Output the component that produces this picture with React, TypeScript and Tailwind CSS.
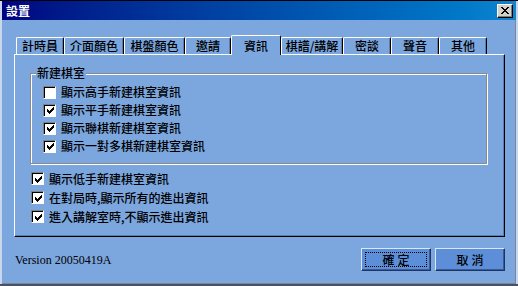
import React from 'react';

const face = 'bg-[#7ba6de]';

const tabs = [
  { label: '計時員', cls: 'w-[48px]' },
  { label: '介面顏色', cls: 'w-[60px]' },
  { label: '棋盤顏色', cls: 'w-[61px]' },
  { label: '邀請', cls: 'w-[46px]' },
  { label: '資訊', cls: 'w-[50px]', active: true },
  { label: '棋譜/講解', cls: 'w-[62px]' },
  { label: '密談', cls: 'w-[48px]' },
  { label: '聲音', cls: 'w-[48px]' },
  { label: '其他', cls: 'w-[48px]' },
];

const checkPixels = [
  [6, 0],
  [5, 1], [6, 1],
  [0, 2], [4, 2], [5, 2], [6, 2],
  [0, 3], [1, 3], [3, 3], [4, 3], [5, 3],
  [0, 4], [1, 4], [2, 4], [3, 4], [4, 4],
  [1, 5], [2, 5], [3, 5],
  [2, 6],
];

const closePixels = [
  [0, 0], [1, 0], [6, 0], [7, 0],
  [1, 1], [2, 1], [5, 1], [6, 1],
  [2, 2], [3, 2], [4, 2], [5, 2],
  [3, 3], [4, 3],
  [2, 4], [3, 4], [4, 4], [5, 4],
  [1, 5], [2, 5], [5, 5], [6, 5],
  [0, 6], [1, 6], [6, 6], [7, 6],
];

function Pixels({ pts, w, h }: { pts: number[][]; w: number; h: number }) {
  return (
    <svg width={w} height={h} viewBox={`0 0 ${w} ${h}`} shapeRendering="crispEdges">
      {pts.map(([x, y]) => (
        <rect key={`${x}-${y}`} x={x} y={y} width="1" height="1" fill="#000" />
      ))}
    </svg>
  );
}

function CheckBox({ checked }: { checked: boolean }) {
  return (
    <span className="w-[13px] h-[13px] shrink-0 bg-white border border-t-[#808080] border-l-[#808080] border-r-white border-b-white shadow-[inset_1px_1px_0_#000] flex items-center justify-center pl-px pt-px">
      {checked && <Pixels pts={checkPixels} w={7} h={7} />}
    </span>
  );
}

function Row({ checked, label, h }: { checked: boolean; label: string; h: string }) {
  return (
    <div className={`flex items-center gap-[5px] ${h}`}>
      <CheckBox checked={checked} />
      <span className="text-[12px] leading-[14px] font-medium text-black">{label}</span>
    </div>
  );
}

export default function App() {
  return (
    <div className="w-[518px] h-[286px] flex flex-col bg-[#c9d7ec] border-t border-b-2 border-b-[#4a5262] px-[2px] font-['Noto_Sans_CJK_TC','Noto_Sans_CJK_SC',sans-serif] overflow-hidden">
      {/* Title bar */}
      <div className="h-[19px] shrink-0 flex items-center justify-between pl-[4px] pr-[3px] bg-gradient-to-r from-[#000080] to-[#1084d0]">
        <span className="text-white text-[12px] font-bold leading-[14px]">設置</span>
        <button className="w-[16px] h-[14px] bg-[#d4d0c8] border border-t-white border-l-white border-r-black border-b-black shadow-[inset_-1px_-1px_0_#808080] flex items-center justify-center">
          <Pixels pts={closePixels} w={8} h={7} />
        </button>
      </div>

      {/* Body */}
      <div className={`flex-1 ${face} border-r border-b border-[#7c8698] pt-[15px] pl-[12px]`}>
        {/* Tabs */}
        <div className="flex items-end h-[19px] pl-[2px]">
          {tabs.map((t) =>
            t.active ? (
              <div
                key={t.label}
                className={`${t.cls} relative z-10 h-[20px] -mb-px ${face} border-t border-l border-white border-r border-r-black rounded-t-[2px] flex items-start justify-center pt-[3px] text-[12px] leading-[14px] font-medium`}
              >
                {t.label}
              </div>
            ) : (
              <div
                key={t.label}
                className={`${t.cls} h-[17px] border-t border-l border-white border-r border-r-black rounded-t-[2px] shadow-[inset_-1px_0_0_#5d7fb0] flex items-center justify-center text-[12px] leading-[14px] font-medium`}
              >
                {t.label}
              </div>
            )
          )}
        </div>

        {/* Panel */}
        <div className="w-[491px] h-[183px] border-t border-l border-white border-r border-b border-r-black border-b-black shadow-[inset_-1px_-1px_0_#5d7fb0] pt-[18px] pl-[15px]">
          <div className="relative w-[457px] h-[91px] border border-[#8a8a8a] shadow-[inset_1px_1px_0_#fff,1px_1px_0_#fff] pt-[9px] pl-[12px]">
            <span className={`absolute -top-[8px] left-[5px] px-px ${face} text-[12px] leading-[14px] font-medium`}>新建棋室</span>
            <Row checked={false} label="顯示高手新建棋室資訊" h="h-[18px]" />
            <Row checked label="顯示平手新建棋室資訊" h="h-[18px]" />
            <Row checked label="顯示聯棋新建棋室資訊" h="h-[18px]" />
            <Row checked label="顯示一對多棋新建棋室資訊" h="h-[18px]" />
          </div>
          <div className="mt-[5px] ml-px">
            <Row checked label="顯示低手新建棋室資訊" h="h-[19px]" />
            <Row checked label="在對局時,顯示所有的進出資訊" h="h-[19px]" />
            <Row checked label="進入講解室時,不顯示進出資訊" h="h-[19px]" />
          </div>
        </div>

        {/* Footer */}
        <div className="w-[491px] mt-[11px] h-[23px] flex items-center justify-between">
          <span className="ml-px text-[12px] leading-[14px] text-black font-['Liberation_Serif',serif]">Version 20050419A</span>
          <div className="flex gap-[4px]">
            <button className="relative w-[70px] h-[23px] bg-[#5c8fd8] border border-t-[#dbe6f6] border-l-[#dbe6f6] border-r-[#1e3466] border-b-[#1e3466] shadow-[inset_-1px_-1px_0_#3a5a98] text-[12px] leading-[14px] font-medium tracking-[3px] pl-[3px]">
              確定
              <span className="absolute inset-[3px] border border-dotted border-black" />
            </button>
            <button className="w-[70px] h-[23px] bg-[#5c8fd8] border border-t-[#dbe6f6] border-l-[#dbe6f6] border-r-[#1e3466] border-b-[#1e3466] shadow-[inset_-1px_-1px_0_#3a5a98] text-[12px] leading-[14px] font-medium tracking-[3px] pl-[3px]">
              取消
            </button>
          </div>
        </div>
      </div>
    </div>
  );
}
